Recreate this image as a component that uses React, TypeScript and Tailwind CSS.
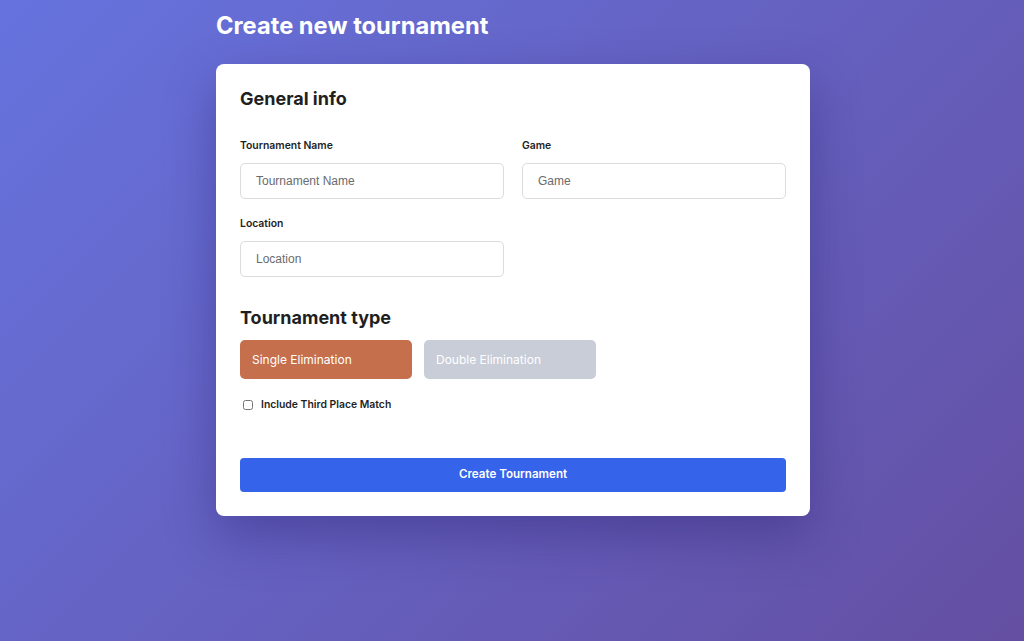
import { useState } from "react";

export default function App() {
    const [type, setType] = useState<"single" | "double">("single");
    const [thirdPlace, setThirdPlace] = useState(false);

    return (
        <div className="min-h-screen w-full bg-[linear-gradient(135deg,#6673de_0%,#644fa2_100%)] font-['Inter','Liberation_Sans',sans-serif]">
            <div className="w-[594px] mx-auto pt-[11px] translate-x-[1px]">
                <h1 className="text-[23.7px] leading-[29px] font-bold text-white">Create new tournament</h1>

                <div className="mt-[24px] bg-white rounded-lg shadow-[0_20px_50px_rgba(40,30,110,0.4)] px-6 pt-[24px] pb-[24px]">
                    <h2 className="text-[18px] leading-[22px] font-bold text-[#1f1f1f]">General info</h2>

                    {/* General fields */}
                    <div className="grid grid-cols-2 gap-x-[18px] gap-y-[19px] mt-[30px]">
                        <div>
                            <label className="block text-[10.4px] leading-[12px] font-semibold text-[#1f1f1f] mb-[11px]">Tournament Name</label>
                            <input
                                placeholder="Tournament Name"
                                className="w-full h-[36px] px-[15px] text-[12px] border border-[#dcdcdc] rounded-[5px] outline-none placeholder:text-[#6b6b6b] font-['Liberation_Sans',sans-serif]"
                            />
                        </div>
                        <div>
                            <label className="block text-[10.4px] leading-[12px] font-semibold text-[#1f1f1f] mb-[11px]">Game</label>
                            <input
                                placeholder="Game"
                                className="w-full h-[36px] px-[15px] text-[12px] border border-[#dcdcdc] rounded-[5px] outline-none placeholder:text-[#6b6b6b] font-['Liberation_Sans',sans-serif]"
                            />
                        </div>
                        <div>
                            <label className="block text-[10.4px] leading-[12px] font-semibold text-[#1f1f1f] mb-[11px]">Location</label>
                            <input
                                placeholder="Location"
                                className="w-full h-[36px] px-[15px] text-[12px] border border-[#dcdcdc] rounded-[5px] outline-none placeholder:text-[#6b6b6b] font-['Liberation_Sans',sans-serif]"
                            />
                        </div>
                    </div>

                    <h2 className="text-[18px] leading-[22px] font-bold text-[#1f1f1f] mt-[30px]">Tournament type</h2>
                    <div className="flex gap-[12px] mt-[11px]">
                        <button
                            onClick={() => setType("single")}
                            className={`w-[172px] h-[39px] rounded-[5px] text-left px-[12px] text-[12px] text-white ${type === "single" ? "bg-[#c56f4c]" : "bg-[#c8cdd8]"}`}
                        >
                            Single Elimination
                        </button>
                        <button
                            onClick={() => setType("double")}
                            className={`w-[172px] h-[39px] rounded-[5px] text-left px-[12px] text-[12px] text-white ${type === "double" ? "bg-[#c56f4c]" : "bg-[#c8cdd8]"}`}
                        >
                            Double Elimination
                        </button>
                    </div>

                    <label className="flex items-center gap-[8px] mt-[18px] ml-[3px] text-[10.4px] font-semibold text-[#1f1f1f]">
                        <input
                            type="checkbox"
                            checked={thirdPlace}
                            onChange={(e) => setThirdPlace(e.target.checked)}
                            className="w-[10px] h-[10px]"
                        />
                        Include Third Place Match
                    </label>

                    <button className="w-full h-[34px] mt-[45px] rounded-[4px] bg-[#3563e9] text-white text-[11.6px] font-semibold">
                        Create Tournament
                    </button>
                </div>
            </div>
        </div>
    );
}
